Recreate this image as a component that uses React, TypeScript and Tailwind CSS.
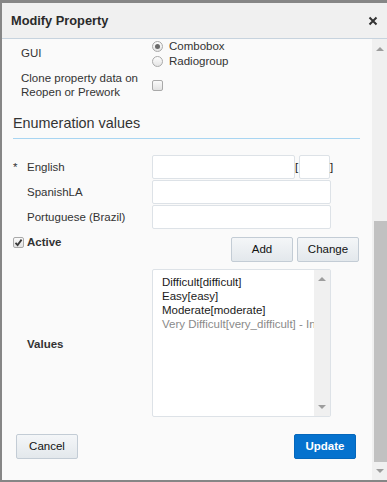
import React from 'react'

// Small form controls drawn by hand to match the old-style widgets
const Radio: React.FC<{ checked?: boolean }> = ({ checked }) => (
  <span className="w-[11px] h-[11px] shrink-0 rounded-full border border-[#a9a9a9] bg-linear-to-b from-[#fdfdfd] to-[#e4e4e4] flex items-center justify-center">
    {checked && <span className="w-[5px] h-[5px] rounded-full bg-[#6a6a6a]" />}
  </span>
)

const Checkbox: React.FC<{ checked?: boolean }> = ({ checked }) => (
  <span className="w-[11px] h-[11px] shrink-0 rounded-[2px] border border-[#a9a9a9] bg-linear-to-b from-[#fafafa] to-[#e2e2e2] flex items-center justify-center">
    {checked && (
      <svg width="9" height="9" viewBox="0 0 9 9">
        <path d="M1.5 4.8 L3.6 7 L7.6 1.6" fill="none" stroke="#3a3a3a" strokeWidth="1.8" />
      </svg>
    )}
  </span>
)

const ArrowUp: React.FC = () => (
  <span className="w-0 h-0 border-x-[4px] border-x-transparent border-b-[4px] border-b-[#9d9d9d]" />
)

const ArrowDown: React.FC = () => (
  <span className="w-0 h-0 border-x-[4px] border-x-transparent border-t-[4px] border-t-[#9d9d9d]" />
)

const TextInput: React.FC<{ className?: string }> = ({ className = '' }) => (
  <div className={`h-[24px] bg-white border border-[#dde2e7] rounded-[2px] ${className}`} />
)

const GrayButton: React.FC<{ label: string }> = ({ label }) => (
  <button className="w-[62px] h-[25px] rounded-[2px] border border-[#c3ccd5] bg-linear-to-b from-[#f4f6f8] to-[#e3e8ec] text-[11.5px] text-[#111]">
    {label}
  </button>
)

const App: React.FC = () => {
  const values = ['Difficult[difficult]', 'Easy[easy]', 'Moderate[moderate]']

  return (
    <div className="w-[387px] h-[482px] flex flex-col overflow-hidden border-t-[3px] border-l-2 border-b-2 border-[#868686] bg-[#fafafa] font-['Liberation_Sans',Arial,sans-serif] text-[11.5px] text-[#333]">
      {/* Dialog header */}
      <div className="h-[36px] shrink-0 flex items-center justify-between pl-[9px] pr-[4px] bg-[#f0f0f0] border-b border-[#c7d3de]">
        <span className="text-[12.8px] font-bold text-[#2a2a2a]">Modify Property</span>
        <span className="w-[20px] h-[20px] flex items-center justify-center">
          <svg width="10" height="10" viewBox="0 0 10 10">
            <path d="M1.5 1.5 L8.5 8.5 M8.5 1.5 L1.5 8.5" stroke="#333" strokeWidth="2" />
          </svg>
        </span>
      </div>

      {/* Body + scrollbar */}
      <div className="flex-1 flex min-h-0">
        <div className="flex-1 flex flex-col">
          {/* GUI */}
          <div className="flex items-center h-[30px]">
            <div className="w-[150px] pl-[19px]">GUI</div>
            <div className="flex flex-col">
              <label className="h-[15px] flex items-center gap-[6px]">
                <Radio checked />
                <span>Combobox</span>
              </label>
              <label className="h-[15px] flex items-center gap-[6px]">
                <Radio />
                <span>Radiogroup</span>
              </label>
            </div>
          </div>

          {/* Clone property */}
          <div className="flex items-center mt-[2px] h-[28px]">
            <div className="w-[150px] pl-[19px] leading-[14px]">
              Clone property data on
              <br />
              Reopen or Prework
            </div>
            <Checkbox />
          </div>

          {/* Section heading */}
          <div className="mt-[15px] ml-[11px] w-[347px] pb-[6px] border-b border-[#a8d5f2]">
            <div className="h-[18px] leading-[18px] text-[14.4px] text-[#333]">Enumeration values</div>
          </div>

          {/* Language inputs */}
          <div className="mt-[16px] flex flex-col gap-[1px]">
            <div className="flex items-center">
              <div className="w-[150px] flex pt-[1px]">
                <span className="w-[25px] pl-[11px]">*</span>
                <span>English</span>
              </div>
              <TextInput className="w-[143px]" />
              <span className="w-[4px] text-[#222] mt-[2px]">[</span>
              <TextInput className="w-[31px]" />
              <span className="text-[#222] mt-[2px]">]</span>
            </div>
            <div className="flex items-center">
              <div className="w-[150px] pl-[25px] pt-[1px]">SpanishLA</div>
              <TextInput className="w-[179px]" />
            </div>
            <div className="flex items-center">
              <div className="w-[150px] pl-[25px] pt-[1px]">Portuguese (Brazil)</div>
              <TextInput className="w-[179px]" />
            </div>
          </div>

          {/* Active + actions */}
          <div className="mt-[8px] flex items-start">
            <label className="w-[229px] pl-[11px] flex items-center gap-[3px] h-[11px]">
              <Checkbox checked />
              <span className="font-bold text-[#333]">Active</span>
            </label>
            <div className="flex gap-[4px]">
              <GrayButton label="Add" />
              <GrayButton label="Change" />
            </div>
          </div>

          {/* Values list */}
          <div className="mt-[7px] flex items-center">
            <div className="w-[150px] pl-[25px] pt-[4px] font-bold text-[#333]">Values</div>
            <div className="w-[179px] h-[148px] flex bg-white border border-[#dde2e7] rounded-[2px]">
              <div className="flex-1 min-w-0 overflow-hidden pl-[9px] pt-[5px] leading-[14px] whitespace-nowrap">
                {values.map(v => (
                  <div key={v} className="text-[#1a1a1a]">{v}</div>
                ))}
                <div className="text-[#8a8a8a]">Very Difficult[very_difficult] - Inactive</div>
              </div>
              <div className="w-[16px] bg-[#f0f0f0] flex flex-col items-center justify-between py-[7px]">
                <ArrowUp />
                <ArrowDown />
              </div>
            </div>
          </div>

          {/* Footer buttons */}
          <div className="mt-[17px] flex justify-between pl-[14px] pr-[16px]">
            <GrayButton label="Cancel" />
            <button className="w-[62px] h-[25px] rounded-[2px] bg-[#0572ce] border border-[#0567bb] text-white font-bold text-[11.5px]">
              Update
            </button>
          </div>
        </div>

        {/* Vertical scrollbar */}
        <div className="w-[15px] shrink-0 bg-[#f0f0f0] flex flex-col items-end">
          <div className="w-full h-[20px] flex items-center justify-center">
            <ArrowUp />
          </div>
          <div className="h-[162px]" />
          <div className="w-[13px] h-[241px] bg-[#c1c1c1]" />
          <div className="w-full flex-1 flex items-center justify-center">
            <ArrowDown />
          </div>
        </div>
      </div>
    </div>
  )
}

export default App
